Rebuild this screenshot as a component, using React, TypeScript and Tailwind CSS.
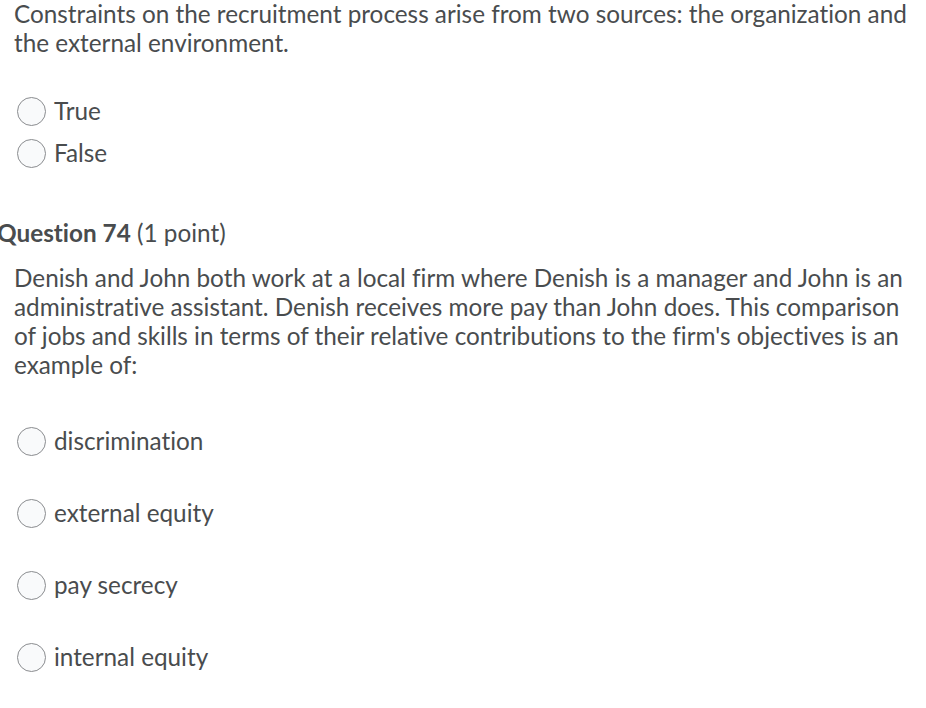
const font = { fontFamily: "Lato, 'Open Sans', sans-serif" };

function Radio({ label, className = "" }: { label: string; className?: string }) {
  return (
    <label className={`flex items-center h-[29px] ${className}`}>
      <span className="ml-[17px] mr-[8px] box-border h-[29px] w-[29px] shrink-0 rounded-full border border-[#8a8c8f] bg-[#f9fafb]" />
      <span className="mb-[2px]">{label}</span>
    </label>
  );
}

export default function App() {
  return (
    <div
      className="min-h-[708px] w-[926px] overflow-hidden bg-white text-[24.3px] leading-[29px] text-[#494c4e] [font-variant-ligatures:none]"
      style={font}
    >
      <p className="-mt-[1px] pl-[14px] pr-[8px]">
        Constraints on the recruitment process arise from two sources: the organization and the external environment.
      </p>
      <div className="mt-[40px] flex flex-col gap-[13px]">
        <Radio label="True" />
        <Radio label="False" />
      </div>
      <h2 className="mt-[50px] ml-[-3px]">
        <span className="font-bold">Question 74</span> (1 point)
      </h2>
      <p className="mt-[16px] pl-[14px] pr-[12px]">
        Denish and John both work at a local firm where Denish is a manager and John is an administrative assistant. Denish receives more pay than John does. This comparison of jobs and skills in terms of their relative contributions to the firm's objectives is an example of:
      </p>
      <div className="mt-[48px] flex flex-col gap-[43px]">
        <Radio label="discrimination" />
        <Radio label="external equity" />
        <Radio label="pay secrecy" />
        <Radio label="internal equity" />
      </div>
    </div>
  );
}
